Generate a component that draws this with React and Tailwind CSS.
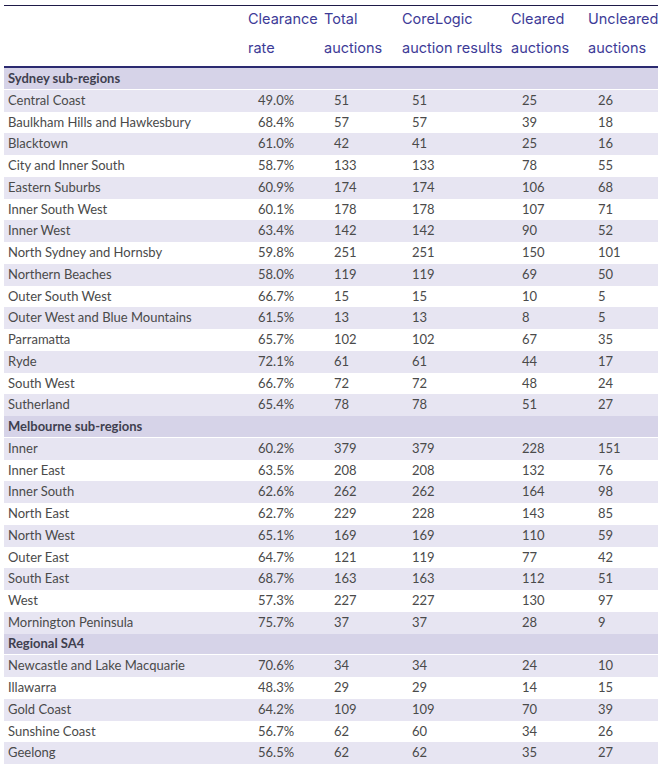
import React from "react";

const sections = [
  {
    title: "Sydney sub-regions",
    rows: [
      ["Central Coast", "49.0%", 51, 51, 25, 26],
      ["Baulkham Hills and Hawkesbury", "68.4%", 57, 57, 39, 18],
      ["Blacktown", "61.0%", 42, 41, 25, 16],
      ["City and Inner South", "58.7%", 133, 133, 78, 55],
      ["Eastern Suburbs", "60.9%", 174, 174, 106, 68],
      ["Inner South West", "60.1%", 178, 178, 107, 71],
      ["Inner West", "63.4%", 142, 142, 90, 52],
      ["North Sydney and Hornsby", "59.8%", 251, 251, 150, 101],
      ["Northern Beaches", "58.0%", 119, 119, 69, 50],
      ["Outer South West", "66.7%", 15, 15, 10, 5],
      ["Outer West and Blue Mountains", "61.5%", 13, 13, 8, 5],
      ["Parramatta", "65.7%", 102, 102, 67, 35],
      ["Ryde", "72.1%", 61, 61, 44, 17],
      ["South West", "66.7%", 72, 72, 48, 24],
      ["Sutherland", "65.4%", 78, 78, 51, 27],
    ],
  },
  {
    title: "Melbourne sub-regions",
    rows: [
      ["Inner", "60.2%", 379, 379, 228, 151],
      ["Inner East", "63.5%", 208, 208, 132, 76],
      ["Inner South", "62.6%", 262, 262, 164, 98],
      ["North East", "62.7%", 229, 228, 143, 85],
      ["North West", "65.1%", 169, 169, 110, 59],
      ["Outer East", "64.7%", 121, 119, 77, 42],
      ["South East", "68.7%", 163, 163, 112, 51],
      ["West", "57.3%", 227, 227, 130, 97],
      ["Mornington Peninsula", "75.7%", 37, 37, 28, 9],
    ],
  },
  {
    title: "Regional SA4",
    rows: [
      ["Newcastle and Lake Macquarie", "70.6%", 34, 34, 24, 10],
      ["Illawarra", "48.3%", 29, 29, 14, 15],
      ["Gold Coast", "64.2%", 109, 109, 70, 39],
      ["Sunshine Coast", "56.7%", 62, 60, 34, 26],
      ["Geelong", "56.5%", 62, 62, 35, 27],
    ],
  },
];

const cols = "grid grid-cols-[244px_76px_78px_109px_77px_70px]";

export default function App() {
  return (
    <div className="w-[665px] h-[769px] bg-white pt-[5px] pl-[4px]">
      <div className="w-[654px]">
        <div className="h-[1px] bg-[#1e1a48]" />
        <div
          className={`${cols} h-[62px] text-[14.5px] leading-[29px] text-[#3d3b97] border-b-2 border-[#2b2a70]`}
          style={{ fontFamily: "Inter, 'Noto Sans', sans-serif" }}
        >
          <div />
          <div className="-mt-[2px]">Clearance<br />rate</div>
          <div className="-mt-[2px]">Total<br />auctions</div>
          <div className="-mt-[2px] whitespace-nowrap">CoreLogic<br />auction results</div>
          <div className="-mt-[2px]">Cleared<br />auctions</div>
          <div className="-mt-[2px]">Uncleared<br />auctions</div>
        </div>
        <div
          className="text-[13px] text-[#4a4a4a]"
          style={{ fontFamily: "Lato, 'Liberation Sans', sans-serif" }}
        >
          {sections.map((s) => (
            <div key={s.title}>
              <div className="h-[21.75px] bg-[#d6d3e8] border-b border-white flex items-center pl-[4px] font-bold text-[#3f3f4f]">
                {s.title}
              </div>
              {s.rows.map((r, i) => (
                <div
                  key={r[0]}
                  className={`${cols} h-[21.75px] items-center ${i % 2 === 0 ? "bg-[#e7e5f2]" : "bg-white"}`}
                >
                  <div className="pl-[4px] whitespace-nowrap">{r[0]}</div>
                  <div className="pl-[10px]">{r[1]}</div>
                  <div className="pl-[10px]">{r[2]}</div>
                  <div className="pl-[10px]">{r[3]}</div>
                  <div className="pl-[11px]">{r[4]}</div>
                  <div className="pl-[10px]">{r[5]}</div>
                </div>
              ))}
            </div>
          ))}
        </div>
      </div>
    </div>
  );
}
